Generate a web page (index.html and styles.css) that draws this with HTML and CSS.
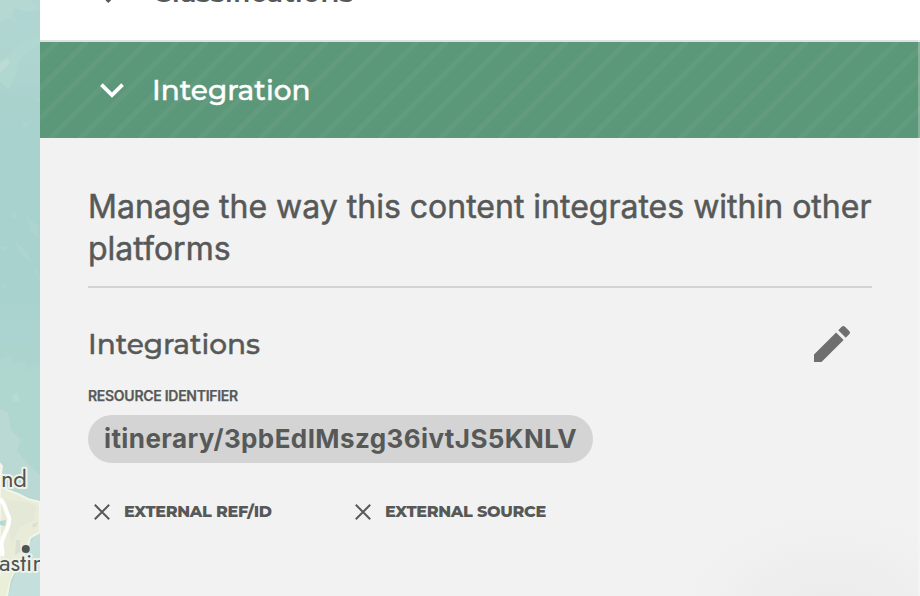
FILE: index.html
```html
<!DOCTYPE html>
<html lang="en">
<head>
<meta charset="utf-8">
<title>Integration</title>
<link rel="stylesheet" href="styles.css">
</head>
<body>
<div class="app">
  <aside class="map">
    <svg width="40" height="596" viewBox="0 0 40 596">
      <defs>
        <linearGradient id="sea" x1="0" y1="0" x2="0" y2="1">
          <stop offset="0" stop-color="#b2d7d2"/><stop offset=".12" stop-color="#aed4d0"/>
          <stop offset=".17" stop-color="#a9d2cd"/><stop offset=".5" stop-color="#a8d2ce"/>
          <stop offset=".7" stop-color="#b1d7d1"/><stop offset="1" stop-color="#bad9d5"/>
        </linearGradient>
      </defs>
      <rect width="40" height="596" fill="url(#sea)"/>
      <path d="M0 0H30L40 8V20L30 16 22 22 8 18 0 22Z" fill="#b5d8d2"/>
      <path d="M14 8L28 12 40 9V22L31 18 20 22 12 16Z" fill="#afd5d2"/>
      <path d="M0 60L9 55 17 44 31 37 40 32V45L29 51 19 62 16 75 9 90 0 82Z" fill="#b1d7d1"/>
      <path d="M0 63L8 58 10 63 4 69 0 72Z" fill="#bbdbd4"/>
      <g fill="#aed4cf">
        <circle cx="21" cy="78" r="3"/><circle cx="38" cy="99" r="2"/><circle cx="25" cy="125" r="2.5"/><circle cx="14" cy="215" r="3"/><circle cx="4" cy="286" r="2"/>
        <path d="M26 214L37 226 39 239 31 231ZM15 242L28 252 31 263 21 254ZM0 246L9 247 3 252ZM36 268L40 276V280L35 272Z"/>
      </g>
      <path d="M0 360L9 356 15 364 24 361 28 372 40 365V480H0Z" fill="#b0d6d0"/>
      <path d="M0 409L8 413 11 430 21 440 17 451 25 460 40 476V500L22 495 0 470Z" fill="#bad9d5"/>
      <path d="M12 395L18 392 19 401 13 402Z" fill="#b8dad4"/>
      <path d="M27 550Q31 538 40 532V596H8L17 568Z" fill="#c5dfdc"/>
      <path d="M0 464L2 466 1 473 5 482 7 490 18 494 28 499 40 502V532L30 538 27 550 17 565 10 580 7 596H0Z" fill="#e8ecd9" stroke="#f2f5e8" stroke-width="2"/>
      <path d="M6 500L28 502 37 507 34 520 21 526 11 545 8 522Z" fill="#e4e8d7"/>
      <path d="M0 575L8 570 12 575 5 596H0Z" fill="#eaf0d8"/>
      <path d="M16 540H20V552L15 555ZM33 524L38 522 36 527 32 527Z" fill="#dce0d2"/>
      <path d="M0 521L6 520 5 526 0 525Z" fill="#b5d8d8"/>
      <path d="M0 499C6 505 5 510 9 517C11 526 4 533 2 541C0 547 4 550 2 556" fill="none" stroke="#fff" stroke-width="4"/>
      <circle cx="25.8" cy="549" r="4" fill="#505354"/>
      <g class="place">
        <text x="1" y="487" textLength="26">nd</text>
        <text x="-1" y="571" textLength="46">astin</text>
      </g>
    </svg>
  </aside>
  <main class="panel">
    <section class="row">
      <svg class="chevron" width="24" height="24" viewBox="0 0 24 24"><path d="M7 .7L17.2 11.2 7 21.7"/></svg>
      <h2 class="heading row-title">Classifications</h2>
    </section>
    <section class="row active">
      <svg class="chevron" width="24" height="16" viewBox="0 0 24 16"><path d="M1.4 2.6L12 13 22.6 2.6"/></svg>
      <h2 class="heading active-title">Integration</h2>
    </section>
    <section class="content">
      <p class="intro">Manage the way this content integrates within other platforms</p>
      <div class="section-head">
        <h3 class="heading section-title">Integrations</h3>
        <svg width="48" height="48" viewBox="0 0 24 24" fill="#6f6f6f"><path d="M3 17.25V21h3.75L17.81 9.94l-3.75-3.75L3 17.25zM20.71 7.04a1 1 0 0 0 0-1.41l-2.34-2.34a1 1 0 0 0-1.41 0l-1.83 1.83 3.75 3.75 1.83-1.83z"/></svg>
      </div>
      <div class="label">RESOURCE IDENTIFIER</div>
      <div class="chip">itinerary/3pbEdIMszg36ivtJS5KNLV</div>
      <div class="externals">
        <div class="external"><svg width="16" height="16" viewBox="0 0 16 16"><path d="M.8.8L15.2 15.2M15.2.8L.8 15.2"/></svg><span class="heading external-name">EXTERNAL REF/ID</span></div>
        <div class="external"><svg width="16" height="16" viewBox="0 0 16 16"><path d="M.8.8L15.2 15.2M15.2.8L.8 15.2"/></svg><span class="heading external-name">EXTERNAL SOURCE</span></div>
      </div>
    </section>
  </main>
  <div class="edge"></div>
</div>
</body>
</html>
```
FILE: styles.css
```css
* { box-sizing: border-box; }
body { margin: 0; font-family: Inter, "Liberation Sans", sans-serif; color: #575958; }
.app { position: relative; display: flex; width: 920px; height: 596px; overflow: hidden; }
.map { width: 40px; overflow: hidden; }
.map svg { display: block; }
.place { font: 24px "Jost", "Lato", sans-serif; fill: #505354; stroke: #eef2e8; stroke-width: 4px; paint-order: stroke; stroke-linejoin: round; }
.panel { width: 880px; background: #f2f2f2; }
.heading { margin: 0; font-family: Montserrat, Inter, sans-serif; white-space: nowrap; }
.row { display: flex; align-items: center; height: 96px; padding-left: 60px; gap: 28px; }
.row:first-child { height: 98px; margin-top: -56px; border-bottom: 2px solid #e0e0e0; background: #fff; }
.chevron { fill: none; stroke: #575958; stroke-width: 3.8; }
.row-title { font-size: 28px; font-weight: 600; line-height: 36px; letter-spacing: -.28px; }
.active { color: #fff; background: repeating-linear-gradient(135deg, #5b9779 0 8.8px, #639b7f 9.6px 13.8px, #5b9779 14.6px 21.213px); }
.active .chevron { stroke: #fff; }
.active-title { font-size: 28px; font-weight: 500; line-height: 36px; -webkit-text-stroke: .4px #fff; }
.content { height: 458px; padding: 48px 48px 0; background: radial-gradient(ellipse 150px 105px at 790px 480px, #ebebeb, #eee 50%, #f2f2f2 100%); }
.intro { height: 102px; margin: 0; border-bottom: 2px solid #d3d3d3; font-size: 32px; line-height: 42px; -webkit-text-stroke: .5px #575958; }
.section-head { display: flex; align-items: center; justify-content: space-between; height: 48px; margin-top: 32px; padding-right: 16px; }
.section-title { font-size: 28px; font-weight: 500; line-height: 36px; letter-spacing: -.05px; -webkit-text-stroke: .4px #575958; }
.label { margin-top: 18px; font-size: 14px; font-weight: 600; line-height: 20px; letter-spacing: -.28px; -webkit-text-stroke: .25px #575958; }
.chip { width: 505px; height: 48px; margin-top: 9px; padding-left: 16px; border-radius: 24px; background: #d4d4d4; font-size: 26px; font-weight: 700; line-height: 48px; letter-spacing: .4px; white-space: nowrap; }
.externals { display: grid; grid-template-columns: 261px 1fr; margin-top: 38px; }
.external { display: flex; align-items: center; gap: 14px; height: 22px; padding-left: 6px; }
.external svg { fill: none; stroke: #575958; stroke-width: 2; }
.external-name { font-size: 16px; font-weight: 800; line-height: 22px; letter-spacing: -.3px; }
.edge { position: absolute; right: 0; top: 0; width: 2px; height: 596px; background: rgba(255,255,255,.25); }
```
